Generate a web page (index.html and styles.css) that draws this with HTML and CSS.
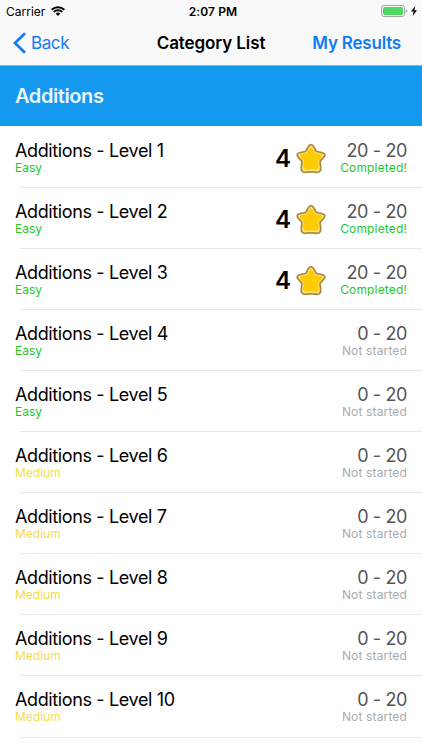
FILE: index.html
```
<!DOCTYPE html>
<html lang="en">
<head>
  <meta charset="UTF-8" />
  <title>Category List</title>
  <meta name="viewport" content="width=device-width, initial-scale=1.0" />
  <link rel="stylesheet" href="styles.css">
</head>

<body>

<header>
  <div class="status-bar">
    <div class="carrier">
      <span>Carrier</span>
      <svg class="wifi" viewBox="0 0 14 10">
        <path d="M0.7 3.7 A9 9 0 0 1 13.3 3.7" />
        <path d="M2.8 5.9 A6 6 0 0 1 11.2 5.9" />
        <path class="dot" d="M7 10 L4.7 7.7 A3.3 3.3 0 0 1 9.3 7.7 Z" />
      </svg>
    </div>
    <div class="time">2:07 PM</div>
    <div class="power">
      <svg class="battery" viewBox="0 0 27 12">
        <rect class="shell" x="0.5" y="0.5" width="23" height="11" rx="2.4" />
        <rect class="charge" x="2" y="2" width="20" height="8" rx="1" />
        <path class="cap" d="M24.8 4 Q26.4 4.6 26.4 6 Q26.4 7.4 24.8 8 Z" />
      </svg>
      <svg class="bolt" viewBox="0 0 6 10">
        <path d="M4.3 0 L0 5.6 H2.6 L1.6 10 L6 4.3 H3.4 Z" />
      </svg>
    </div>
  </div>

  <nav>
    <a class="back">
      <svg class="chevron" viewBox="0 0 13 22">
        <path d="M12 1.3 L2 11 L12 20.7" />
      </svg>
      <span>Back</span>
    </a>
    <h1>Category List</h1>
    <a class="results">My Results</a>
  </nav>
</header>

<h2 class="section-title">Additions</h2>

<svg class="defs">
  <symbol id="star" viewBox="0 0 32 32">
    <path class="star-edge" d="M13 4.2 Q16 -1 19 4.2 L21 8 Q21.6 8.8 25.8 9.3 Q32.4 10.4 28.2 14.8 L25.4 17.8 Q24.8 18.6 25.6 23 Q26.6 30.4 20.6 29.2 Q16 28.4 11.4 29.2 Q5.4 30.4 6.4 23 Q7.2 18.6 6.6 17.8 L3.8 14.8 Q-0.4 10.4 6.2 9.3 Q10.4 8.8 11 8 Z" />
    <path class="star-fill" d="M13 4.2 Q16 -1 19 4.2 L21 8 Q21.6 8.8 25.8 9.3 Q32.4 10.4 28.2 14.8 L25.4 17.8 Q24.8 18.6 25.6 23 Q26.6 30.4 20.6 29.2 Q16 28.4 11.4 29.2 Q5.4 30.4 6.4 23 Q7.2 18.6 6.6 17.8 L3.8 14.8 Q-0.4 10.4 6.2 9.3 Q10.4 8.8 11 8 Z" />
  </symbol>
</svg>

<ul class="levels">
  <li>
    <div class="level"><p class="name">Additions - Level 1</p><p class="easy">Easy</p></div>
    <div class="stars">4 <svg><use href="#star" /></svg></div>
    <div class="score"><p class="count">20 - 20</p><p class="completed">Completed!</p></div>
  </li>
  <li>
    <div class="level"><p class="name">Additions - Level 2</p><p class="easy">Easy</p></div>
    <div class="stars">4 <svg><use href="#star" /></svg></div>
    <div class="score"><p class="count">20 - 20</p><p class="completed">Completed!</p></div>
  </li>
  <li>
    <div class="level"><p class="name">Additions - Level 3</p><p class="easy">Easy</p></div>
    <div class="stars">4 <svg><use href="#star" /></svg></div>
    <div class="score"><p class="count">20 - 20</p><p class="completed">Completed!</p></div>
  </li>
  <li>
    <div class="level"><p class="name">Additions - Level 4</p><p class="easy">Easy</p></div>
    <div class="score"><p class="count">0 - 20</p><p class="waiting">Not started</p></div>
  </li>
  <li>
    <div class="level"><p class="name">Additions - Level 5</p><p class="easy">Easy</p></div>
    <div class="score"><p class="count">0 - 20</p><p class="waiting">Not started</p></div>
  </li>
  <li>
    <div class="level"><p class="name">Additions - Level 6</p><p class="medium">Medium</p></div>
    <div class="score"><p class="count">0 - 20</p><p class="waiting">Not started</p></div>
  </li>
  <li>
    <div class="level"><p class="name">Additions - Level 7</p><p class="medium">Medium</p></div>
    <div class="score"><p class="count">0 - 20</p><p class="waiting">Not started</p></div>
  </li>
  <li>
    <div class="level"><p class="name">Additions - Level 8</p><p class="medium">Medium</p></div>
    <div class="score"><p class="count">0 - 20</p><p class="waiting">Not started</p></div>
  </li>
  <li>
    <div class="level"><p class="name">Additions - Level 9</p><p class="medium">Medium</p></div>
    <div class="score"><p class="count">0 - 20</p><p class="waiting">Not started</p></div>
  </li>
  <li>
    <div class="level"><p class="name">Additions - Level 10</p><p class="medium">Medium</p></div>
    <div class="score"><p class="count">0 - 20</p><p class="waiting">Not started</p></div>
  </li>
</ul>

</body>
</html>
```
FILE: styles.css
```
:root {
  --bar-bg: #f9f9f9;
  --link-color: #0f7bf5;
  --section-bg: #1499ee;
  --line-color: #e8e8ea;
  --easy-color: #1fc72f;
  --medium-color: #f3dc4c;
}

* {
  box-sizing: border-box;
  margin: 0;
  padding: 0;
}

html, body {
  height: 100%;
  overflow: hidden;
  font-family: Inter, "Liberation Sans", sans-serif;
  background: #fff;
  color: #000;
}

svg {
  display: block;
}

header {
  height: 66px;
  background: var(--bar-bg);
  border-bottom: 1px solid #7fb9e3;
}

.status-bar {
  display: grid;
  grid-template-columns: 1fr auto 1fr;
  align-items: center;
  height: 22px;
  padding: 0 5px 0 6px;
  font-size: 12px;
}

.carrier {
  display: flex;
  align-items: center;
  gap: 6px;
}

.wifi {
  width: 14px;
  height: 10px;
  fill: none;
  stroke: #000;
  stroke-width: 2;
}

.wifi .dot {
  fill: #000;
  stroke: none;
}

.time {
  font-weight: 600;
  letter-spacing: 0.1px;
  padding-left: 3px;
}

.power {
  display: flex;
  justify-content: flex-end;
  align-items: center;
  gap: 3px;
}

.battery {
  width: 27px;
  height: 12px;
}

.shell {
  fill: #fff;
  stroke: #a2a2a2;
}

.charge {
  fill: #4cd964;
}

.cap {
  fill: #a2a2a2;
}

.bolt {
  width: 6px;
  height: 10px;
}

nav {
  display: grid;
  grid-template-columns: 1fr auto 1fr;
  align-items: center;
  height: 42px;
  padding: 0 21px 0 13px;
  font-size: 17px;
}

nav a {
  color: var(--link-color);
}

.back {
  display: flex;
  align-items: center;
  gap: 5px;
  letter-spacing: -0.4px;
}

.chevron {
  width: 13px;
  height: 22px;
  fill: none;
  stroke: var(--link-color);
  stroke-width: 2.7;
}

h1 {
  padding-left: 8px;
  font-size: 17px;
  font-weight: 600;
  letter-spacing: -0.1px;
}

.results {
  font-weight: 600;
  letter-spacing: -0.2px;
  text-align: right;
}

.section-title {
  height: 60px;
  padding-left: 15px;
  background: var(--section-bg);
  color: #e9f8ff;
  font-size: 20px;
  font-weight: 600;
  letter-spacing: -0.4px;
  line-height: 61px;
}

.defs {
  width: 0;
  height: 0;
}

.levels {
  padding-top: 0.6px;
  list-style: none;
}

.levels li {
  display: flex;
  height: 61.1px;
  padding: 13px 15px 0;
  background: linear-gradient(var(--line-color), var(--line-color)) 20px 100% / 100% 1px no-repeat;
}

.level {
  flex: 1;
}

.level p, .score p {
  font-size: 12px;
  line-height: 13px;
}

.level .name, .score .count {
  margin-bottom: -1px;
  font-size: 18px;
  line-height: 22px;
  letter-spacing: -0.37px;
}

.stars {
  display: flex;
  align-items: center;
  gap: 4px;
  height: 38px;
  font-size: 24px;
  font-weight: 600;
}

.stars svg {
  width: 32px;
  height: 32px;
}

.star-edge {
  fill: #ffe487;
  stroke: #a98d3c;
  stroke-width: 1.8;
}

.star-fill {
  fill: #ffcb05;
  transform: translate(3.2px, 3.3px) scale(0.8);
}

.score {
  width: 80px;
  text-align: right;
}

.score .count {
  color: #555;
}

.score .completed, .score .waiting {
  letter-spacing: 0.15px;
}

.easy, .completed {
  color: var(--easy-color);
}

.medium {
  color: var(--medium-color);
}

.waiting {
  color: #ababab;
}
```
